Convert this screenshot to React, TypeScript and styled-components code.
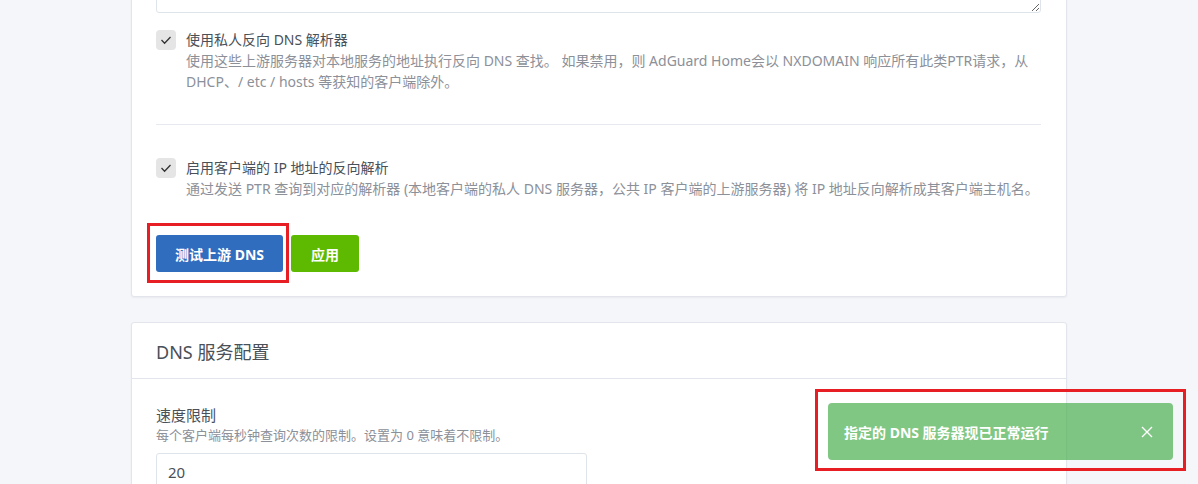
import React from "react";
import styled, { createGlobalStyle } from "styled-components";

const Global = createGlobalStyle`
  html, body { margin: 0; padding: 0; }
  body {
    background: #f5f6fa;
    font-family: "Noto Sans", "Noto Sans CJK SC", sans-serif;
    color: #495057;
    overflow: hidden;
  }
  * { box-sizing: border-box; }
`;

const Page = styled.div`
  width: 1198px;
  height: 484px;
  overflow: hidden;
  position: relative;
`;

const Column = styled.div`
  width: 936px;
  margin-left: 131px;
  margin-top: -92px;
  display: flex;
  flex-direction: column;
  gap: 25px;
`;

const Card = styled.div`
  background: #fff;
  border: 1px solid #e2e5ec;
  border-radius: 3px;
  box-shadow: 0 1px 2px rgba(0, 20, 60, 0.05);
`;

const CardBody = styled.div`
  padding: 24px 25px 24px 24px;
  display: flex;
  flex-direction: column;
`;

const CardHeader = styled.div`
  height: 56px;
  padding: 0 24px;
  display: flex;
  align-items: center;
  border-bottom: 1px solid #e2e5ec;
  font-size: 18px;
  color: #495057;
`;

const TextArea = styled.textarea`
  width: 100%;
  height: 80px;
  border: 1px solid #dfe3ea;
  border-radius: 3px;
  resize: vertical;
  display: block;
  background: #fff;
  outline: none;
`;

const CheckGroup = styled.div<{ $mt: number }>`
  margin-top: ${(p) => p.$mt}px;
  display: flex;
  gap: 10px;
`;

const CheckBox = styled.span`
  flex: none;
  width: 20px;
  height: 20px;
  border-radius: 4px;
  background: #e5e5e5;
  display: flex;
  align-items: center;
  justify-content: center;
`;

const CheckText = styled.div`
  display: flex;
  flex-direction: column;
`;

const CheckLabel = styled.div`
  font-size: 14px;
  line-height: 20px;
  color: #495057;
`;

const CheckDesc = styled.div`
  font-size: 14px;
  line-height: 21px;
  color: #8c9099;
`;

const Divider = styled.hr`
  margin: 32px 0 0 0;
  border: none;
  border-top: 1px solid #e6e9ef;
  height: 0;
`;

const ButtonRow = styled.div`
  margin-top: 36px;
  display: flex;
  gap: 8px;
`;

const Button = styled.button<{ $variant: "primary" | "success"; $w: number }>`
  position: relative;
  width: ${(p) => p.$w}px;
  height: 37px;
  border: none;
  border-radius: 3px;
  background: ${(p) => (p.$variant === "primary" ? "#316dbf" : "#5eba00")};
  color: #fff;
  font-family: "Noto Sans", "Noto Sans CJK SC", sans-serif;
  font-weight: 700;
  font-size: 14px;
  padding: 0;
`;

const Annotation = styled.span<{ $t: number; $r: number; $b: number; $l: number }>`
  position: absolute;
  top: ${(p) => -p.$t}px;
  right: ${(p) => -p.$r}px;
  bottom: ${(p) => -p.$b}px;
  left: ${(p) => -p.$l}px;
  border: 3px solid #e81e25;
  pointer-events: none;
`;

const FieldLabel = styled.div`
  font-size: 15px;
  line-height: 24px;
  color: #495057;
`;

const FieldDesc = styled.div`
  font-size: 13px;
  line-height: 16px;
  color: #8c9099;
`;

const Input = styled.input`
  margin-top: 10px;
  width: 431px;
  height: 38px;
  border: 1px solid #dfe3ea;
  border-radius: 3px;
  padding: 0 11px;
  font-size: 15px;
  font-family: "Noto Sans", "Noto Sans CJK SC", sans-serif;
  color: #495057;
  outline: none;
`;

const Toast = styled.div`
  position: absolute;
  right: 25px;
  bottom: 24px;
  width: 345px;
  height: 57px;
  border-radius: 4px;
  background: rgba(76, 175, 80, 0.7);
  display: flex;
  align-items: center;
  justify-content: space-between;
  padding: 0 20px 0 16px;
  color: #fff;
  font-weight: 700;
  font-size: 14px;
`;

const CloseIcon = styled.svg`
  width: 12px;
  height: 12px;
  display: block;
`;

const Check = () => (
  <CheckBox>
    <svg width="20" height="20" viewBox="0 0 20 20">
      <polyline points="5.5,10 8.6,13.2 14.5,7" fill="none" stroke="#333" strokeWidth="1.3" />
    </svg>
  </CheckBox>
);

export default function App() {
  return (
    <Page>
      <Global />
      <Column>
        <Card>
          <CardBody>
            <TextArea readOnly />
            <CheckGroup $mt={17}>
              <Check />
              <CheckText>
                <CheckLabel>使用私人反向 DNS 解析器</CheckLabel>
                <CheckDesc>
                  使用这些上游服务器对本地服务的地址执行反向 DNS 查找。 如果禁用，则 AdGuard Home会以 NXDOMAIN 响应所有此类PTR请求，从 DHCP、/ etc / hosts 等获知的客户端除外。
                </CheckDesc>
              </CheckText>
            </CheckGroup>
            <Divider />
            <CheckGroup $mt={33}>
              <Check />
              <CheckText>
                <CheckLabel>启用客户端的 IP 地址的反向解析</CheckLabel>
                <CheckDesc>
                  通过发送 PTR 查询到对应的解析器 (本地客户端的私人 DNS 服务器，公共 IP 客户端的上游服务器) 将 IP 地址反向解析成其客户端主机名。
                </CheckDesc>
              </CheckText>
            </CheckGroup>
            <ButtonRow>
              <Button $variant="primary" $w={127}>
                测试上游 DNS
                <Annotation $t={12} $r={6} $b={11} $l={9} />
              </Button>
              <Button $variant="success" $w={68}>
                应用
              </Button>
            </ButtonRow>
          </CardBody>
        </Card>
        <Card>
          <CardHeader>DNS 服务配置</CardHeader>
          <CardBody>
            <FieldLabel>速度限制</FieldLabel>
            <FieldDesc>每个客户端每秒钟查询次数的限制。设置为 0 意味着不限制。</FieldDesc>
            <Input defaultValue="20" />
          </CardBody>
        </Card>
      </Column>
      <Toast>
        <span>指定的 DNS 服务器现已正常运行</span>
        <CloseIcon viewBox="0 0 12 12">
          <path d="M1 1L11 11M11 1L1 11" stroke="#fff" strokeWidth="1.4" fill="none" />
        </CloseIcon>
        <Annotation $t={14} $r={13} $b={11} $l={13} />
      </Toast>
    </Page>
  );
}
